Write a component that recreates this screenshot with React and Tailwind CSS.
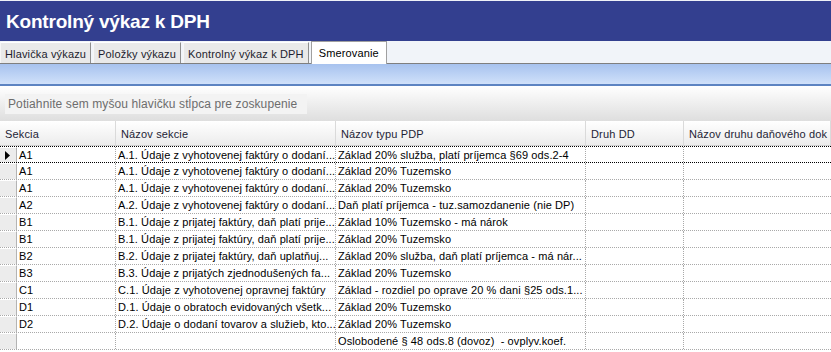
import React from 'react';

const tabs = ['Hlavička výkazu', 'Položky výkazu', 'Kontrolný výkaz k DPH', 'Smerovanie'];

const columns = [
  { title: 'Sekcia', w: 'w-[116px]' },
  { title: 'Názov sekcie', w: 'w-[220px]' },
  { title: 'Názov typu PDP', w: 'w-[250px]' },
  { title: 'Druh DD', w: 'w-[98px]' },
  { title: 'Názov druhu daňového dok', w: 'flex-1' },
];

const rows = [
  ['A1', 'A.1. Údaje z vyhotovenej faktúry o dodaní...', 'Základ 20% služba, platí príjemca §69 ods.2-4'],
  ['A1', 'A.1. Údaje z vyhotovenej faktúry o dodaní...', 'Základ 20% Tuzemsko'],
  ['A1', 'A.1. Údaje z vyhotovenej faktúry o dodaní...', 'Základ 20% Tuzemsko'],
  ['A2', 'A.2. Údaje z vyhotovenej faktúry o dodaní...', 'Daň platí príjemca - tuz.samozdanenie (nie DP)'],
  ['B1', 'B.1. Údaje z prijatej faktúry, daň platí prije...', 'Základ 10% Tuzemsko - má nárok'],
  ['B1', 'B.1. Údaje z prijatej faktúry, daň platí prije...', 'Základ 20% Tuzemsko'],
  ['B2', 'B.2. Údaje z prijatej faktúry, daň uplatňuj...', 'Základ 20% služba, daň platí príjemca - má nár...'],
  ['B3', 'B.3. Údaje z prijatých zjednodušených fa...', 'Základ 20% Tuzemsko'],
  ['C1', 'C.1. Údaje z vyhotovenej opravnej faktúry', 'Základ - rozdiel po oprave 20 % dani §25 ods.1...'],
  ['D1', 'D.1. Údaje o obratoch evidovaných všetk...', 'Základ 20% Tuzemsko'],
  ['D2', 'D.2. Údaje o dodaní tovarov a služieb, kto...', 'Základ 20% Tuzemsko'],
  ['', '', 'Oslobodené § 48 ods.8 (dovoz)  - ovplyv.koef.'],
];

const Cell = ({ w, children }) => (
  <div className={`${w} shrink-0 h-full border-r border-dotted border-[#a9a9a9] pl-[2px] overflow-hidden whitespace-pre leading-[16px]`}>
    {children}
  </div>
);

const App = () => {
  return (
    <div
      className="w-[831px] h-[352px] overflow-hidden bg-white text-[11px] tracking-[0.1px] text-black"
      style={{ fontFamily: '"Liberation Sans", Arial, sans-serif' }}
    >
      <div className="h-[1px] bg-[#eef1f7]" />
      <div className="h-[40px] bg-[#333f8f] flex items-center pl-[6px] pt-[2px]">
        <h1 className="text-white font-bold text-[19px] tracking-[-0.2px]">Kontrolný výkaz k DPH</h1>
      </div>

      <div className="h-[23px] bg-[#f1f4f9] flex items-end border-b border-[#7f7f7f] tracking-[0.15px]">
        {tabs.map((t, i) =>
          i === 3 ? (
            <div key={t} className="h-[23px] -mb-[1px] bg-white border-x border-t border-[#a0a0a0] px-[7px] pt-[4px] leading-[14px]">
              {t}
            </div>
          ) : (
            <div
              key={t}
              className="h-[21px] mr-[2px] bg-[#e9e9e9] border border-b-0 border-t-white border-l-[#f6f6f6] border-r-[#8e8e8e] px-[4px] pt-[4px] leading-[14px] text-[#1d1d2e]"
            >
              {t}
            </div>
          )
        )}
      </div>

      <div className="h-[22px] bg-gradient-to-b from-[#a7c2ee] to-[#d0e1fa] border-b-[2px] border-[#5d84c2]" />

      <div className="h-[35px] bg-gradient-to-b from-white to-[#dedede] pt-[8px] pl-[5px]">
        <div className="w-[302px] h-[20px] bg-[#f3f3f3] text-[#6d6d6d] text-[12px] tracking-[0.1px] pl-[3px] leading-[20px] whitespace-nowrap">
          Potiahnite sem myšou hlavičku stĺpca pre zoskupenie
        </div>
      </div>

      <div className="h-[25px] flex bg-gradient-to-b from-white to-[#ececec] border-b border-[#d0d0d0] tracking-[0.15px]">
        {columns.map((c) => (
          <div
            key={c.title}
            className={`${c.w} shrink-0 h-full border-r border-[#dadada] pl-[5px] pt-[5px] text-[#1e1e36] whitespace-nowrap overflow-hidden`}
          >
            {c.title}
          </div>
        ))}
      </div>

      <div>
        {rows.map((r, i) => (
          <div key={i} className={`h-[17px] flex border-b border-dotted ${i === 0 ? 'border-black border-t' : 'border-[#a9a9a9]'}`}>
            <div className="w-[17px] shrink-0 h-full bg-[#ececec] border-r border-[#b4b4b4] border-t border-t-white flex items-center pl-[5px]">
              {i === 0 && (
                <svg width="5" height="9" viewBox="0 0 5 9">
                  <path d="M0 0 L5 4.5 L0 9 Z" fill="#000" />
                </svg>
              )}
            </div>
            <Cell w="w-[99px]">{r[0]}</Cell>
            <Cell w="w-[220px]">{r[1]}</Cell>
            <Cell w="w-[250px]">{r[2]}</Cell>
            <Cell w="w-[98px]" />
            <div className="flex-1" />
          </div>
        ))}
      </div>
    </div>
  );
};

export default App;
